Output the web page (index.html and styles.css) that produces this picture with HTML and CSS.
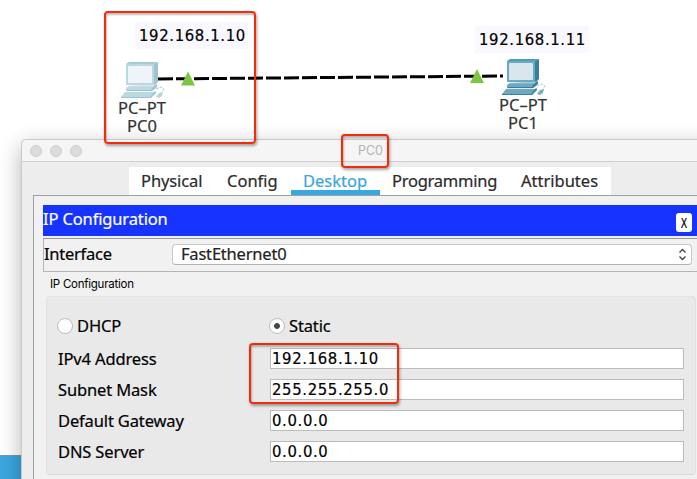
FILE: index.html
```html
<!DOCTYPE html>
<html lang="en">
<head>
<meta charset="utf-8">
<title>PC0</title>
<link rel="stylesheet" href="styles.css">
</head>
<body>
<main class="stage">
  <svg class="links" viewBox="0 0 697 139" width="697" height="139">
    <path d="M158 79L503 76" stroke="#000" stroke-width="3" stroke-dasharray="15 3"/>
    <path d="M188 71.500L195 85.500H181ZM477 69L484 83H470Z" fill="#7dc640"/>
  </svg>
  <div class="address address-pc0">192.168.1.10</div>
  <div class="address address-pc1">192.168.1.11</div>
  <div class="node node-pc0">
    <svg class="pc pc-faded" viewBox="0 0 46 38" width="46" height="38">
      <path class="side" d="M34 3L38 1V21L34 25Z"/>
      <path class="top" d="M6 3L9 1H38L34 3Z"/>
      <path class="face" d="M6 3H34V24H6Z"/>
      <rect class="screen" x="8" y="5" width="24" height="17" rx="1"/>
      <path class="face" d="M9 25L36 23V27L32 30H6V27Z"/>
      <path class="side" d="M32 27L37 23V26L32 30H7V29H31Z"/>
      <path class="gap" d="M9 24.800H34M6 30.500H32"/>
      <path class="face" d="M5 31H36L31 36H1Z"/>
      <path class="side" d="M35 30L36 31V32L31 37H1V36H30Z"/>
      <path class="mouse" d="M39 32L43 31L42 35L39 37L36 36Z"/>
      <path class="cord" d="M36 28L41 26L44 28L42 31"/>
    </svg>
    <span>PC–PT</span><span>PC0</span>
  </div>
  <div class="node node-pc1">
    <svg class="pc" viewBox="0 0 46 38" width="46" height="38">
      <path class="side" d="M34 3L38 1V21L34 25Z"/>
      <path class="top" d="M6 3L9 1H38L34 3Z"/>
      <path class="face" d="M6 3H34V24H6Z"/>
      <rect class="screen" x="8" y="5" width="24" height="17" rx="1"/>
      <path class="face" d="M9 25L36 23V27L32 30H6V27Z"/>
      <path class="side" d="M32 27L37 23V26L32 30H7V29H31Z"/>
      <path class="gap" d="M9 24.800H34M6 30.500H32"/>
      <path class="face" d="M5 31H36L31 36H1Z"/>
      <path class="side" d="M35 30L36 31V32L31 37H1V36H30Z"/>
      <path class="mouse" d="M39 32L43 31L42 35L39 37L36 36Z"/>
      <path class="cord" d="M36 28L41 26L44 28L42 31"/>
    </svg>
    <span>PC–PT</span><span>PC1</span>
  </div>
  <div class="dock"></div>

  <section class="window">
    <header class="titlebar"><i></i><i></i><i></i><span class="title">PC0</span></header>
    <nav class="tabs">
      <span class="tab physical">Physical</span>
      <span class="tab config">Config</span>
      <span class="tab desktop">Desktop</span>
      <span class="tab programming">Programming</span>
      <span class="tab attributes">Attributes</span>
    </nav>
    <div class="panel">
      <div class="heading"><span>IP Configuration</span><button class="close"><span>X</span></button></div>
      <div class="interface">
        <span class="interface-label">Interface</span>
        <div class="select"><span>FastEthernet0</span>
          <svg width="9" height="13" viewBox="0 0 9 13"><path d="M1.500 4.500L4.500 1.500L7.500 4.500M1.500 8.500L4.500 11.500L7.500 8.500" fill="none" stroke="#444" stroke-width="1.300"/></svg>
        </div>
      </div>
      <div class="legend">IP Configuration</div>
      <div class="group">
        <div class="modes">
          <label class="mode"><i class="radio"></i><span>DHCP</span></label>
          <label class="mode"><i class="radio on"></i><span>Static</span></label>
        </div>
        <div class="row"><span class="label">IPv4 Address</span><div class="field">192.168.1.10</div></div>
        <div class="row"><span class="label">Subnet Mask</span><div class="field">255.255.255.0</div></div>
        <div class="row"><span class="label">Default Gateway</span><div class="field">0.0.0.0</div></div>
        <div class="row"><span class="label">DNS Server</span><div class="field">0.0.0.0</div></div>
      </div>
    </div>
  </section>

  <div class="callout callout-device"></div>
  <div class="callout callout-title"></div>
  <div class="callout callout-fields"></div>
</main>
</body>
</html>
```
FILE: styles.css
```css
* { box-sizing: border-box; }
body { margin: 0; overflow: hidden; }
.stage {
  position: relative;
  width: 697px;
  height: 479px;
  overflow: hidden;
  background: #fff;
  color: #000;
  font: 16.5px/20px "Noto Sans", sans-serif;
  letter-spacing: -.14px;
  -webkit-text-stroke: .2px currentColor;
  white-space: nowrap;
}
.links { position: absolute; left: 0; top: 0; }
.address, .field {
  font-family: "DejaVu Sans Condensed", "DejaVu Sans", sans-serif;
  font-stretch: condensed;
  font-size: 16.5px;
  letter-spacing: .65px;
}
.address {
  position: absolute;
  width: 114px;
  height: 27px;
  padding: 4px 0 0 4px;
  background: #f9f8ff;
}
.address-pc0 { left: 135px; top: 22px; }
.address-pc1 { left: 475px; top: 26px; }
.node {
  position: absolute;
  width: 60px;
  display: flex;
  flex-direction: column;
  align-items: center;
  color: #333;
  font-size: 16.5px;
  letter-spacing: 0;
  line-height: 18px;
}
.node-pc0 { left: 112px; top: 61px; }
.node-pc1 { left: 493px; top: 58px; }
.pc { display: block; margin-left: 2px; }
.side { fill: #36809d; }
.top { fill: #4b9db8; }
.face { fill: #6fa9c0; }
.screen { fill: #d8e6ed; }
.mouse { fill: #79afc4; }
.cord { fill: none; stroke: #a8cbd8; stroke-dasharray: 3 1; }
.gap { fill: none; stroke: #d0e3ea; stroke-width: .8; }
.pc-faded .side { fill: #9fc4d1; }
.pc-faded .top { fill: #a6cad6; }
.pc-faded .face { fill: #bbd8e3; }
.pc-faded .screen { fill: #eef4f8; }
.pc-faded .mouse { fill: #b7d5df; }
.pc-faded .gap { stroke: #e9f2f6; }
.dock { position: absolute; left: 0; top: 455px; width: 40px; height: 24px; background: #3ba6df; border-top: 1px solid #7998a8; }

.window {
  position: absolute;
  left: 21px;
  top: 139px;
  width: 720px;
  height: 380px;
  border: 1px solid #c9c9c9;
  border-radius: 5px 0 0 0;
  background: #ededed;
  box-shadow: 0 7px 22px rgba(0, 0, 0, .3);
}
.titlebar {
  display: flex;
  align-items: center;
  gap: 8px;
  height: 22px;
  padding-left: 8px;
  border-bottom: 1px solid #d0d0d0;
  border-radius: 5px 0 0 0;
  background: #f5f5f5;
}
.titlebar i { width: 12px; height: 12px; border: 1px solid #cecece; border-radius: 50%; background: #dcdcdc; }
.title { margin: 1px 0 0 268px; color: #b4b4b4; font: 12.5px/16px Inter, sans-serif; letter-spacing: -.1px; -webkit-text-stroke: 0; }
.tabs { display: flex; width: 482px; height: 28px; margin: 5px 0 0 107px; background: #fff; color: #2a2a2a; }
.tab { height: 28px; line-height: 28px; }
.physical { width: 86px; padding-left: 12px; letter-spacing: -.1px; }
.config { width: 76px; padding-left: 12px; letter-spacing: 0; }
.desktop { width: 89px; padding-left: 12px; color: #3aa5dc; border-bottom: 5px solid #3aa8e0; letter-spacing: 0; }
.programming { width: 129px; padding-left: 12px; letter-spacing: -.25px; }
.attributes { padding-left: 12px; letter-spacing: 0; }
.panel { width: 700px; margin-left: 11px; padding: 9px 0 0 9px; border: 1px solid #a0a0a0; border-width: 1px 0 0 1px; height: 310px; background: #f1f1f1; }
.heading { display: flex; justify-content: space-between; width: 680px; height: 31px; padding-right: 31px; background: #1733ff; color: #fff; line-height: 28px; }
.close { width: 16px; height: 19px; margin-top: 8px; padding: 0; border: 0; border-radius: 3px; background: #fff; color: #000; font: 14px/18px "DejaVu Sans Condensed", sans-serif; font-stretch: condensed; }
.close span { display: block; transform: scaleX(.75); }
.interface { display: flex; width: 680px; height: 34px; margin-top: 2px; border: 1px solid #b5b5b5; border-top-color: #999; border-right: 0; }
.interface-label { width: 128px; line-height: 30px; letter-spacing: -.25px; }
.select { display: flex; align-items: center; justify-content: space-between; width: 520px; height: 21px; margin-top: 5px; padding: 0 4px 0 8px; border: 1px solid #c8c8c8; border-bottom-color: #b0b0b0; border-radius: 4px; background: #fff; color: #222; line-height: 18px; }
.select span { height: 20px; letter-spacing: -.2px; }
.legend { height: 24px; padding: 4px 0 0 7px; font: 11.5px/16px Inter, sans-serif; letter-spacing: -.25px; -webkit-text-stroke: 0; }
.group { width: 650px; height: 179px; margin-left: 3px; padding: 18px 10px 0 10px; border: 1px solid #e2e2e2; border-bottom-color: #d9d9d9; border-radius: 4px; background: #e9e9e9; }
.modes { display: grid; grid-template-columns: 212px 200px; height: 33px; }
.mode { display: flex; height: 22px; align-items: center; gap: 4px; }
.radio { width: 16px; height: 16px; border: 1px solid #bdbdbd; border-radius: 50%; background: #fff; }
.on { background: radial-gradient(circle, #444 0 2.500px, #fff 3.300px); }
.row { display: flex; height: 21px; margin-bottom: 10px; }
.label { width: 213px; padding-left: 1px; line-height: 21px; }
.field { width: 414px; height: 21px; padding-left: 1px; border: 1px solid #bcbcbc; background: #fff; line-height: 20px; }

.callout { position: absolute; border: 2px solid #f32b0b; border-radius: 4px; box-shadow: 1px 2px 3px rgba(0, 0, 0, .35), inset 1px 2px 2px rgba(0, 0, 0, .25); }
.callout-device { left: 104px; top: 11px; width: 152px; height: 133px; }
.callout-title { left: 341px; top: 134px; width: 48px; height: 34px; }
.callout-fields { left: 249px; top: 343px; width: 150px; height: 61px; }
```
